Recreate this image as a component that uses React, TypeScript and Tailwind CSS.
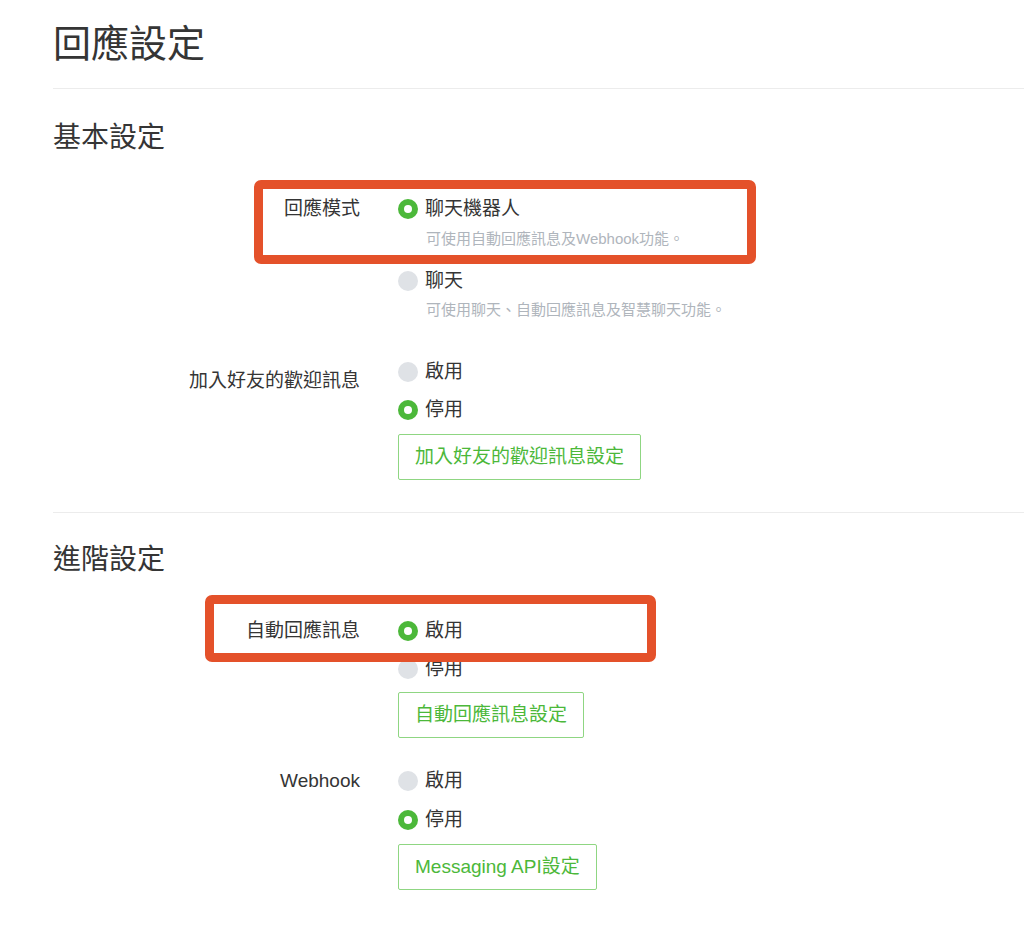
import React from "react";

const FONT = { fontFamily: '"Liberation Sans", "Noto Sans CJK TC", sans-serif' };

function Radio({ checked, label }: { checked?: boolean; label: string }) {
  return (
    <div className="flex items-center h-[24px] gap-[7px]">
      {checked ? (
        <span className="w-[20px] h-[20px] rounded-full bg-[#4cb83a] flex items-center justify-center">
          <span className="w-[8px] h-[8px] rounded-full bg-white" />
        </span>
      ) : (
        <span className="w-[20px] h-[20px] rounded-full bg-[#dfe2e6]" />
      )}
      <span className="text-[19px] leading-[24px] text-[#353535]">{label}</span>
    </div>
  );
}

function Desc({ children }: { children: React.ReactNode }) {
  return <p className="pl-[28px] text-[15px] leading-[22px] text-[#afb5bc]">{children}</p>;
}

function SetupButton({ children, tight }: { children: React.ReactNode; tight?: boolean }) {
  return (
    <button
      className={`${tight ? "mt-[11px]" : "mt-[12px]"} h-[46px] px-[16px] border border-[#8fd682] rounded-[2px] text-[19px] text-[#4cb83a] bg-white`}
    >
      {children}
    </button>
  );
}

function Row({ label, labelOffset = "", children }: { label: string; labelOffset?: string; children: React.ReactNode }) {
  return (
    <div className="flex">
      <div className={`w-[307px] shrink-0 text-right text-[19px] leading-[24px] text-[#353535] ${labelOffset}`}>{label}</div>
      <div className="ml-[38px] flex flex-col items-start">{children}</div>
    </div>
  );
}

export default function App() {
  return (
    <div className="relative w-[1024px] h-[942px] bg-white overflow-hidden pl-[53px] pt-[21px]" style={FONT}>
      <h1 className="text-[38px] leading-[46px] text-[#353535]">回應設定</h1>
      <div className="mt-[21px] h-px bg-[#ececec]" />

      <h2 className="mt-[32px] text-[28px] leading-[34px] text-[#353535]">基本設定</h2>

      <div className="mt-[42px] flex flex-col gap-[39px]">
        <Row label="回應模式">
          <Radio checked label="聊天機器人" />
          <div className="mt-[7px]">
            <Desc>可使用自動回應訊息及Webhook功能。</Desc>
          </div>
          <div className="mt-[19px]">
            <Radio label="聊天" />
          </div>
          <div className="mt-[6px]">
            <Desc>可使用聊天、自動回應訊息及智慧聊天功能。</Desc>
          </div>
        </Row>

        <Row label="加入好友的歡迎訊息" labelOffset="mt-[9px]">
          <div className="flex flex-col gap-[14px]">
            <Radio label="啟用" />
            <Radio checked label="停用" />
          </div>
          <SetupButton>加入好友的歡迎訊息設定</SetupButton>
        </Row>
      </div>

      <div className="mt-[32px] h-px bg-[#ececec]" />

      <h2 className="mt-[30px] text-[28px] leading-[34px] text-[#353535]">進階設定</h2>

      <div className="mt-[42px] flex flex-col gap-[31px]">
        <Row label="自動回應訊息">
          <div className="flex flex-col gap-[14px]">
            <Radio checked label="啟用" />
            <Radio label="停用" />
          </div>
          <SetupButton tight>自動回應訊息設定</SetupButton>
        </Row>

        <Row label="Webhook">
          <div className="flex flex-col gap-[15px]">
            <Radio label="啟用" />
            <Radio checked label="停用" />
          </div>
          <SetupButton>Messaging API設定</SetupButton>
        </Row>
      </div>

      {/* highlight boxes */}
      <div className="absolute left-[254px] top-[180px] w-[502px] h-[84px] border-[9px] border-[#e4512a] rounded-[7px]" />
      <div className="absolute left-[205px] top-[595px] w-[451px] h-[67px] border-[9px] border-[#e4512a] rounded-[7px]" />
    </div>
  );
}
